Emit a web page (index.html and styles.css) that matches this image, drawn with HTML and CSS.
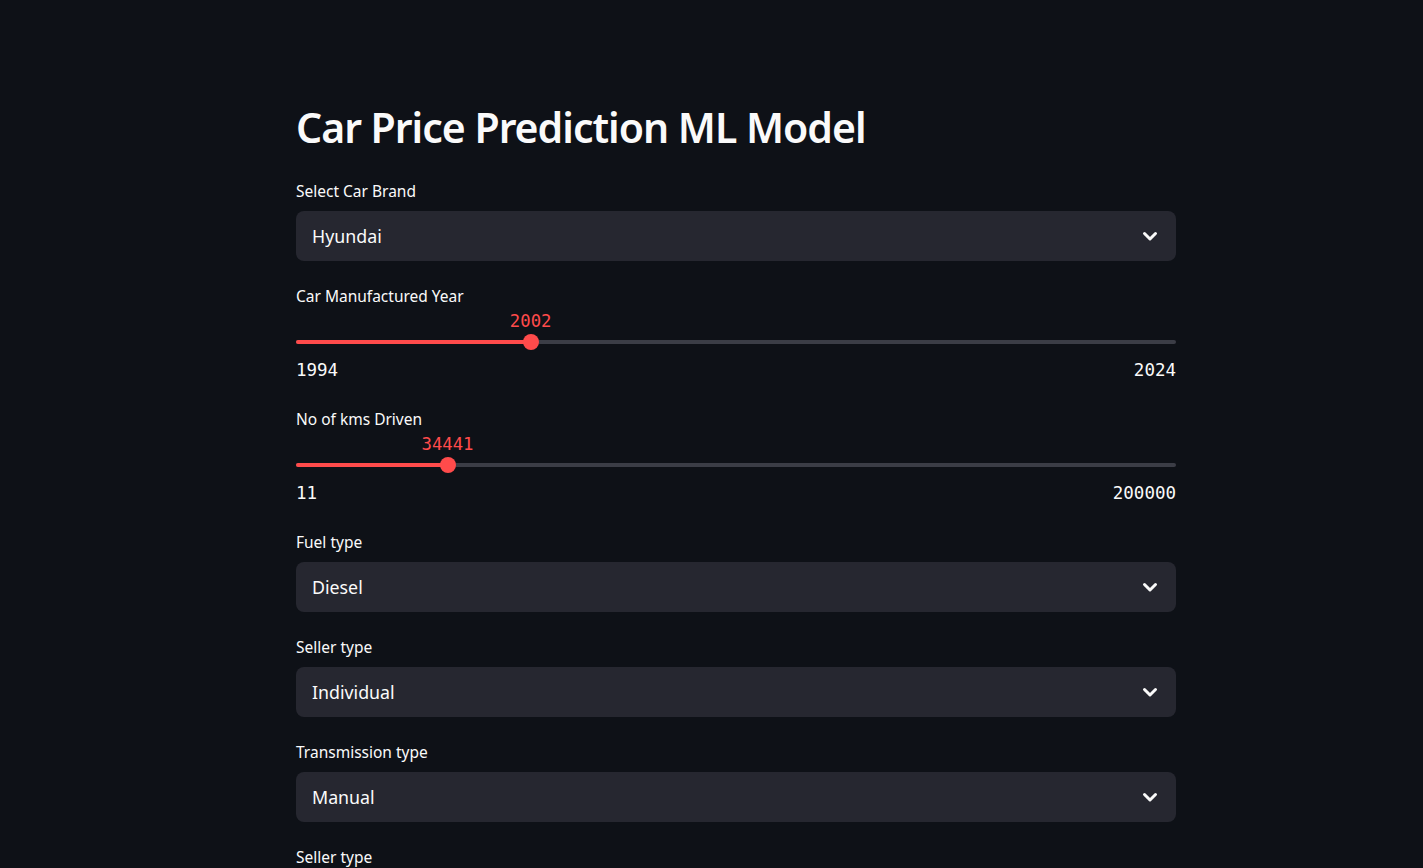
FILE: index.html
```html
<!DOCTYPE html>
<html lang="en">
<head>
<meta charset="utf-8">
<title>Car Price Prediction ML Model</title>
<link rel="stylesheet" href="styles.css">
</head>
<body>
<main class="main">
  <h1 class="title">Car Price Prediction ML Model</h1>

  <div class="field">
    <label class="label">Select Car Brand</label>
    <div class="select"><span class="select-value">Hyundai</span>
      <svg class="chev" viewBox="0 0 24 24" width="24" height="24"><path d="M6.5 9.5l5.5 5.5 5.5-5.5" fill="none" stroke="#fafafa" stroke-width="3" stroke-linecap="round" stroke-linejoin="round"/></svg>
    </div>
  </div>

  <div class="field slider-field">
    <label class="label">Car Manufactured Year</label>
    <div class="value-row"><span class="value" style="left:26.667%">2002</span></div>
    <div class="track-wrap">
      <div class="track"><div class="fill" style="width:26.667%"></div></div>
      <div class="thumb" style="left:26.667%"></div>
    </div>
    <div class="minmax"><span>1994</span><span>2024</span></div>
  </div>

  <div class="field slider-field">
    <label class="label">No of kms Driven</label>
    <div class="value-row"><span class="value" style="left:17.216%">34441</span></div>
    <div class="track-wrap">
      <div class="track"><div class="fill" style="width:17.216%"></div></div>
      <div class="thumb" style="left:17.216%"></div>
    </div>
    <div class="minmax"><span>11</span><span>200000</span></div>
  </div>

  <div class="field">
    <label class="label">Fuel type</label>
    <div class="select"><span class="select-value">Diesel</span>
      <svg class="chev" viewBox="0 0 24 24" width="24" height="24"><path d="M6.5 9.5l5.5 5.5 5.5-5.5" fill="none" stroke="#fafafa" stroke-width="3" stroke-linecap="round" stroke-linejoin="round"/></svg>
    </div>
  </div>

  <div class="field">
    <label class="label">Seller type</label>
    <div class="select"><span class="select-value">Individual</span>
      <svg class="chev" viewBox="0 0 24 24" width="24" height="24"><path d="M6.5 9.5l5.5 5.5 5.5-5.5" fill="none" stroke="#fafafa" stroke-width="3" stroke-linecap="round" stroke-linejoin="round"/></svg>
    </div>
  </div>

  <div class="field">
    <label class="label">Transmission type</label>
    <div class="select"><span class="select-value">Manual</span>
      <svg class="chev" viewBox="0 0 24 24" width="24" height="24"><path d="M6.5 9.5l5.5 5.5 5.5-5.5" fill="none" stroke="#fafafa" stroke-width="3" stroke-linecap="round" stroke-linejoin="round"/></svg>
    </div>
  </div>

  <div class="field">
    <label class="label">Seller type</label>
    <div class="select"><span class="select-value">Dealer</span>
      <svg class="chev" viewBox="0 0 24 24" width="24" height="24"><path d="M6.5 9.5l5.5 5.5 5.5-5.5" fill="none" stroke="#fafafa" stroke-width="3" stroke-linecap="round" stroke-linejoin="round"/></svg>
    </div>
  </div>
</main>
</body>
</html>
```

FILE: styles.css
```css
html, body {
  margin: 0;
  padding: 0;
  background: #0e1117;
  color: #fafafa;
  font-family: "Noto Sans", "Open Sans", sans-serif;
}

.main {
  width: 880px;
  margin-left: 296px;
  padding-top: 101px;
  padding-bottom: 80px;
  display: flex;
  flex-direction: column;
}

.title {
  margin: 0 0 27px 0;
  font-size: 41px;
  line-height: 53px;
  font-weight: 600;
  letter-spacing: -1px;
}

.field {
  display: flex;
  flex-direction: column;
  margin-bottom: 25px;
}

.slider-field {
  margin-bottom: 29px;
}

.label {
  font-size: 15.5px;
  line-height: 20px;
  height: 20px;
  margin-bottom: 10px;
}

.slider-field .label {
  margin-bottom: 5px;
}

.select {
  height: 50px;
  background: #262730;
  border-radius: 8px;
  display: flex;
  align-items: center;
  justify-content: space-between;
  padding: 0 16px;
  box-sizing: border-box;
}

.select-value {
  font-size: 17.8px;
}

.chev {
  margin-right: -2px;
}

.value-row {
  position: relative;
  height: 20px;
  margin-bottom: 3px;
}

.value {
  position: absolute;
  top: 0;
  transform: translateX(-50%);
  color: #ff4b4b;
  font-family: "DejaVu Sans Mono", "Liberation Mono", monospace;
  font-size: 17.3px;
  line-height: 20px;
}

.track-wrap {
  position: relative;
  height: 16px;
  display: flex;
  align-items: center;
}

.track {
  width: 100%;
  height: 4px;
  border-radius: 2px;
  background: #3b3d46;
  overflow: hidden;
}

.fill {
  height: 100%;
  background: #ff4b4b;
}

.thumb {
  position: absolute;
  top: 0;
  width: 16px;
  height: 16px;
  border-radius: 50%;
  background: #ff4b4b;
  transform: translateX(-50%);
}

.minmax {
  margin-top: 10px;
  display: flex;
  justify-content: space-between;
  font-family: "DejaVu Sans Mono", "Liberation Mono", monospace;
  font-size: 17.5px;
  line-height: 20px;
}
```
